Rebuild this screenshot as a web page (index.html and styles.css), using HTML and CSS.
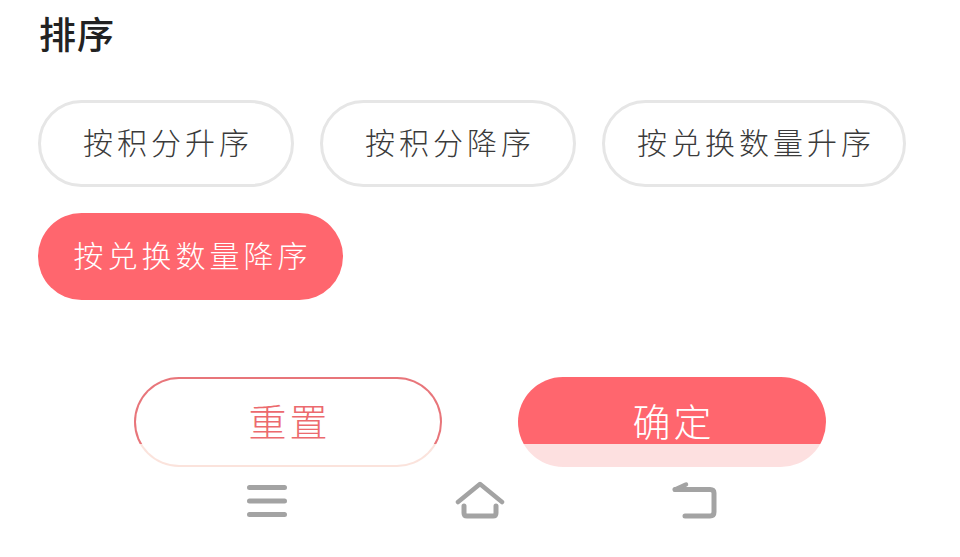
FILE: index.html
```html
<!DOCTYPE html>
<html lang="zh-CN">
  <head>
    <meta charset="UTF-8" />
    <meta name="viewport" content="width=device-width, initial-scale=1.0" />
    <title>排序</title>
    <link rel="stylesheet" href="styles.css">
  </head>
  <body>
    <h1 class="title">排序</h1>
    <div class="chips">
      <div class="chip chip-short">按积分升序</div>
      <div class="chip chip-short">按积分降序</div>
      <div class="chip">按兑换数量升序</div>
      <div class="chip chip-active">按兑换数量降序</div>
    </div>
    <div class="actions">
      <div class="btn btn-reset">重置</div>
      <div class="btn btn-ok">确定</div>
    </div>
    <div class="nav">
      <svg class="nav-menu" width="40" height="38" viewBox="0 0 40 38" fill="none" xmlns="http://www.w3.org/2000/svg">
        <path d="M2.5 6.5H37.5M2.5 20H37.5M2.5 33.5H37.5" stroke="#a3a3a3" stroke-width="5" stroke-linecap="round" />
      </svg>
      <svg class="nav-home" width="50" height="38" viewBox="0 0 50 38" fill="none" xmlns="http://www.w3.org/2000/svg">
        <path d="M3 21L25 3L47 21" stroke="#a3a3a3" stroke-width="4.5" stroke-linecap="round" stroke-linejoin="round" />
        <path d="M9 25V32Q9 35 12 35H38Q41 35 41 32V25" stroke="#a3a3a3" stroke-width="5" stroke-linecap="round" />
      </svg>
      <svg class="nav-back" width="46" height="38" viewBox="0 0 46 38" fill="none" xmlns="http://www.w3.org/2000/svg">
        <path d="M4 8.5H39Q43 8.5 43 12V31Q43 35 39 35H14" stroke="#a3a3a3" stroke-width="5" stroke-linecap="round" />
        <path d="M4 8.5L15 3.5" stroke="#a3a3a3" stroke-width="4.5" stroke-linecap="round" />
      </svg>
    </div>
  </body>
</html>
```

FILE: styles.css
```css
body {
  margin: 0;
  height: 557px;
  overflow: hidden;
  background: #fff;
  color: #3a3a3a;
  font-family: "Noto Sans CJK SC", "Noto Sans", sans-serif;
}
.title {
  margin: 0;
  padding: 9px 0 0 39px;
  height: 89px;
  box-sizing: border-box;
  font-size: 37px;
  line-height: 48px;
  font-weight: 500;
  letter-spacing: 1px;
  color: #222;
}
.chips {
  display: flex;
  flex-wrap: wrap;
  gap: 26px;
  padding: 11px 40px 0 38px;
  height: 200px;
  box-sizing: border-box;
}
.chip {
  box-sizing: border-box;
  width: 304px;
  height: 87px;
  border: 3px solid #e6e6e6;
  border-radius: 44px;
  padding: 0 0 6px 4px;
  display: flex;
  align-items: center;
  justify-content: center;
  font-size: 30px;
  font-weight: 300;
  letter-spacing: 4px;
}
.chip-short {
  width: 256px;
}
.chip-active {
  width: 305px;
  border: 0;
  background: #ff666e;
  color: #fff;
}
.actions {
  display: flex;
  justify-content: center;
  gap: 76px;
  padding-top: 88px;
}
.btn {
  box-sizing: border-box;
  width: 308px;
  height: 90px;
  border-radius: 45px;
  padding: 0 0 6px 3px;
  display: flex;
  align-items: center;
  justify-content: center;
  font-size: 38px;
  font-weight: 300;
  letter-spacing: 3px;
}
.btn-reset {
  border: 2.5px solid transparent;
  background:
    linear-gradient(#fff, #fff) padding-box,
    linear-gradient(#e8757a 0, #e8757a 67px, #fbe3dc 67px) border-box;
  color: #ec6a6e;
}
.btn-ok {
  background: linear-gradient(#ff666e 0, #ff666e 67px, #fde0e0 67px);
  color: #fff;
}
.nav {
  display: flex;
  gap: 168px;
  padding: 14px 0 0 247px;
}
.nav-back {
  margin-left: -2px;
}
```
